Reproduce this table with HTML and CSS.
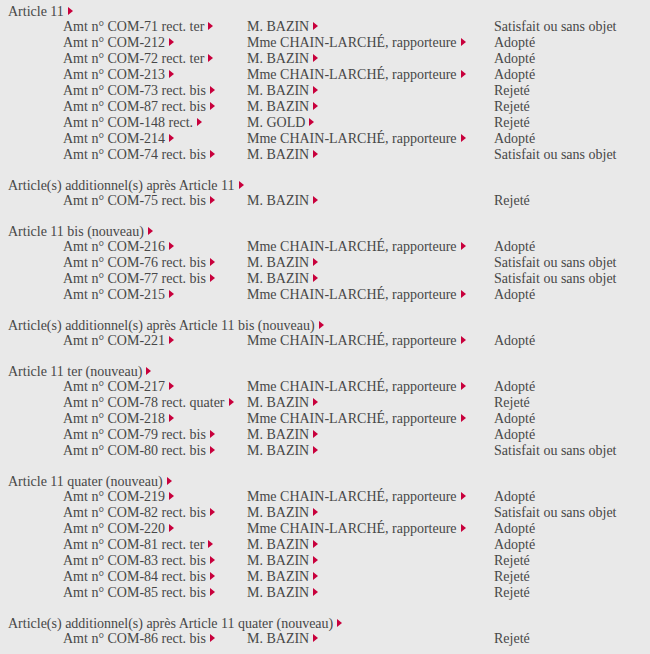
FILE: index.html
```html
<!DOCTYPE html>
<html lang="fr">
<head>
<meta charset="utf-8">
<title>Amendements</title>
<link rel="stylesheet" href="styles.css">
</head>
<body>
<svg width="0" height="0" class="defs"><defs><symbol id="arr" viewBox="0 0 5 8"><path d="M0 0 L5 4 L0 8 Z"/></symbol></defs></svg>

<section class="sec">
  <div class="head">Article 11<svg class="ar"><use href="#arr"/></svg></div>
  <div class="row"><span>Amt n° COM-71 rect. ter<svg class="ar"><use href="#arr"/></svg></span><span>M. BAZIN<svg class="ar"><use href="#arr"/></svg></span><span>Satisfait ou sans objet</span></div>
  <div class="row"><span>Amt n° COM-212<svg class="ar"><use href="#arr"/></svg></span><span>Mme CHAIN-LARCHÉ, rapporteure<svg class="ar"><use href="#arr"/></svg></span><span>Adopté</span></div>
  <div class="row"><span>Amt n° COM-72 rect. ter<svg class="ar"><use href="#arr"/></svg></span><span>M. BAZIN<svg class="ar"><use href="#arr"/></svg></span><span>Adopté</span></div>
  <div class="row"><span>Amt n° COM-213<svg class="ar"><use href="#arr"/></svg></span><span>Mme CHAIN-LARCHÉ, rapporteure<svg class="ar"><use href="#arr"/></svg></span><span>Adopté</span></div>
  <div class="row"><span>Amt n° COM-73 rect. bis<svg class="ar"><use href="#arr"/></svg></span><span>M. BAZIN<svg class="ar"><use href="#arr"/></svg></span><span>Rejeté</span></div>
  <div class="row"><span>Amt n° COM-87 rect. bis<svg class="ar"><use href="#arr"/></svg></span><span>M. BAZIN<svg class="ar"><use href="#arr"/></svg></span><span>Rejeté</span></div>
  <div class="row"><span>Amt n° COM-148 rect.<svg class="ar"><use href="#arr"/></svg></span><span>M. GOLD<svg class="ar"><use href="#arr"/></svg></span><span>Rejeté</span></div>
  <div class="row"><span>Amt n° COM-214<svg class="ar"><use href="#arr"/></svg></span><span>Mme CHAIN-LARCHÉ, rapporteure<svg class="ar"><use href="#arr"/></svg></span><span>Adopté</span></div>
  <div class="row"><span>Amt n° COM-74 rect. bis<svg class="ar"><use href="#arr"/></svg></span><span>M. BAZIN<svg class="ar"><use href="#arr"/></svg></span><span>Satisfait ou sans objet</span></div>
</section>

<section class="sec">
  <div class="head">Article(s) additionnel(s) après Article 11<svg class="ar"><use href="#arr"/></svg></div>
  <div class="row"><span>Amt n° COM-75 rect. bis<svg class="ar"><use href="#arr"/></svg></span><span>M. BAZIN<svg class="ar"><use href="#arr"/></svg></span><span>Rejeté</span></div>
</section>

<section class="sec">
  <div class="head">Article 11 bis (nouveau)<svg class="ar"><use href="#arr"/></svg></div>
  <div class="row"><span>Amt n° COM-216<svg class="ar"><use href="#arr"/></svg></span><span>Mme CHAIN-LARCHÉ, rapporteure<svg class="ar"><use href="#arr"/></svg></span><span>Adopté</span></div>
  <div class="row"><span>Amt n° COM-76 rect. bis<svg class="ar"><use href="#arr"/></svg></span><span>M. BAZIN<svg class="ar"><use href="#arr"/></svg></span><span>Satisfait ou sans objet</span></div>
  <div class="row"><span>Amt n° COM-77 rect. bis<svg class="ar"><use href="#arr"/></svg></span><span>M. BAZIN<svg class="ar"><use href="#arr"/></svg></span><span>Satisfait ou sans objet</span></div>
  <div class="row"><span>Amt n° COM-215<svg class="ar"><use href="#arr"/></svg></span><span>Mme CHAIN-LARCHÉ, rapporteure<svg class="ar"><use href="#arr"/></svg></span><span>Adopté</span></div>
</section>

<section class="sec">
  <div class="head">Article(s) additionnel(s) après Article 11 bis (nouveau)<svg class="ar"><use href="#arr"/></svg></div>
  <div class="row"><span>Amt n° COM-221<svg class="ar"><use href="#arr"/></svg></span><span>Mme CHAIN-LARCHÉ, rapporteure<svg class="ar"><use href="#arr"/></svg></span><span>Adopté</span></div>
</section>

<section class="sec">
  <div class="head">Article 11 ter (nouveau)<svg class="ar"><use href="#arr"/></svg></div>
  <div class="row"><span>Amt n° COM-217<svg class="ar"><use href="#arr"/></svg></span><span>Mme CHAIN-LARCHÉ, rapporteure<svg class="ar"><use href="#arr"/></svg></span><span>Adopté</span></div>
  <div class="row"><span>Amt n° COM-78 rect. quater<svg class="ar"><use href="#arr"/></svg></span><span>M. BAZIN<svg class="ar"><use href="#arr"/></svg></span><span>Rejeté</span></div>
  <div class="row"><span>Amt n° COM-218<svg class="ar"><use href="#arr"/></svg></span><span>Mme CHAIN-LARCHÉ, rapporteure<svg class="ar"><use href="#arr"/></svg></span><span>Adopté</span></div>
  <div class="row"><span>Amt n° COM-79 rect. bis<svg class="ar"><use href="#arr"/></svg></span><span>M. BAZIN<svg class="ar"><use href="#arr"/></svg></span><span>Adopté</span></div>
  <div class="row"><span>Amt n° COM-80 rect. bis<svg class="ar"><use href="#arr"/></svg></span><span>M. BAZIN<svg class="ar"><use href="#arr"/></svg></span><span>Satisfait ou sans objet</span></div>
</section>

<section class="sec">
  <div class="head">Article 11 quater (nouveau)<svg class="ar"><use href="#arr"/></svg></div>
  <div class="row"><span>Amt n° COM-219<svg class="ar"><use href="#arr"/></svg></span><span>Mme CHAIN-LARCHÉ, rapporteure<svg class="ar"><use href="#arr"/></svg></span><span>Adopté</span></div>
  <div class="row"><span>Amt n° COM-82 rect. bis<svg class="ar"><use href="#arr"/></svg></span><span>M. BAZIN<svg class="ar"><use href="#arr"/></svg></span><span>Satisfait ou sans objet</span></div>
  <div class="row"><span>Amt n° COM-220<svg class="ar"><use href="#arr"/></svg></span><span>Mme CHAIN-LARCHÉ, rapporteure<svg class="ar"><use href="#arr"/></svg></span><span>Adopté</span></div>
  <div class="row"><span>Amt n° COM-81 rect. ter<svg class="ar"><use href="#arr"/></svg></span><span>M. BAZIN<svg class="ar"><use href="#arr"/></svg></span><span>Adopté</span></div>
  <div class="row"><span>Amt n° COM-83 rect. bis<svg class="ar"><use href="#arr"/></svg></span><span>M. BAZIN<svg class="ar"><use href="#arr"/></svg></span><span>Rejeté</span></div>
  <div class="row"><span>Amt n° COM-84 rect. bis<svg class="ar"><use href="#arr"/></svg></span><span>M. BAZIN<svg class="ar"><use href="#arr"/></svg></span><span>Rejeté</span></div>
  <div class="row"><span>Amt n° COM-85 rect. bis<svg class="ar"><use href="#arr"/></svg></span><span>M. BAZIN<svg class="ar"><use href="#arr"/></svg></span><span>Rejeté</span></div>
</section>

<section class="sec">
  <div class="head">Article(s) additionnel(s) après Article 11 quater (nouveau)<svg class="ar"><use href="#arr"/></svg></div>
  <div class="row"><span>Amt n° COM-86 rect. bis<svg class="ar"><use href="#arr"/></svg></span><span>M. BAZIN<svg class="ar"><use href="#arr"/></svg></span><span>Rejeté</span></div>
</section>
</body>
</html>
```

FILE: styles.css
```css
html {
  background: #e9e9e9;
}
body {
  margin: 0;
  padding: 4px 0 0 8px;
  font-family: "Liberation Serif", "Times New Roman", serif;
  font-size: 14px;
  line-height: 16px;
  color: #474747;
  overflow: hidden;
}
.defs {
  position: absolute;
  width: 0;
  height: 0;
}
.sec {
  margin-bottom: 15px;
}
.head {
  line-height: 15px;
  white-space: nowrap;
}
.row {
  display: grid;
  grid-template-columns: 184px 247px auto;
  padding-left: 55px;
  line-height: 16px;
  white-space: nowrap;
}
.ar {
  width: 5px;
  height: 8px;
  margin-left: 4px;
  vertical-align: 1px;
  fill: #c8003c;
}
```
